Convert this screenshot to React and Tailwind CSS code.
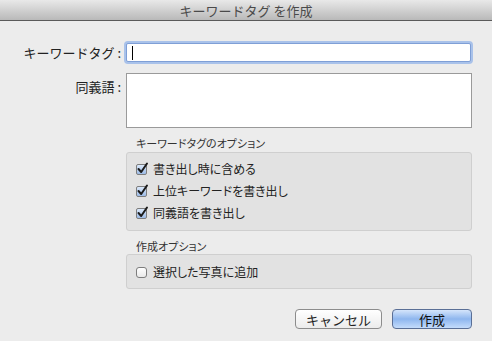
import React from 'react';

const font = { fontFamily: '"Noto Sans CJK JP", "Noto Sans", sans-serif' };

const Check = ({ checked }) => (
  <span
    className={`relative inline-flex h-[11px] w-[11px] shrink-0 border border-[#7d7d7d] ${
      checked ? 'rounded-[2px] bg-gradient-to-b from-[#dbe9fb] to-[#9dbbe6]' : 'rounded-[3px] bg-gradient-to-b from-white to-[#e9e9e9]'
    }`}
  >
    {checked && (
      <svg className="absolute -left-[1px] -top-[3px]" width="13" height="13" viewBox="0 0 13 13">
        <path d="M2.5 7 L5.2 10 L11 1.5" fill="none" stroke="#1b1b1b" strokeWidth="2" strokeLinecap="round" strokeLinejoin="round" />
      </svg>
    )}
  </span>
);

const Option = ({ checked, label }) => (
  <div className="flex h-[22px] items-center gap-[6px]">
    <Check checked={checked} />
    <span className="whitespace-nowrap text-[12px] leading-none text-[#222] [font-feature-settings:'palt']">{label}</span>
  </div>
);

export default function App() {
  return (
    <div className="h-[341px] w-[492px] overflow-hidden bg-[#ececec]" style={font}>
      {/* title bar */}
      <div className="flex h-[21px] items-center justify-center border-b border-[#5a5a5a] bg-gradient-to-b from-[#e9e9e9] to-[#b9b9b9]">
        <span className="text-[13px] leading-none text-[#4a4a4a]">キーワードタグ を作成</span>
      </div>

      <div className="px-[20px] pt-[22px]">
        <div className="flex items-center">
          <label className="w-[106px] whitespace-nowrap pr-[5px] text-right text-[13px] leading-none text-[#222]">キーワードタグ :</label>
          <div className="flex h-[19px] w-[345px] items-center rounded-[2px] border border-[#7f9fd6] bg-white pl-[5px] shadow-[0_0_0_2px_#a9c2ea]">
            <span className="h-[14px] w-px bg-black" />
          </div>
        </div>

        <div className="mt-[11px] flex items-start">
          <label className="w-[106px] whitespace-nowrap pr-[5px] pt-[7px] text-right text-[13px] leading-none text-[#222]">同義語 :</label>
          <div className="h-[55px] w-[346px] border border-[#9a9a9a] bg-white" />
        </div>

        <div className="ml-[106px] w-[346px]">
          <div className="pl-[10px] pt-[10px] text-[11px] leading-none text-[#333] [font-feature-settings:'palt']">キーワードタグのオプション</div>
          <div className="mt-[3px] h-[79px] rounded-[3px] border border-[#cfcfcf] bg-[#e2e2e2] pl-[9px] pt-[5px]">
            <Option checked label="書き出し時に含める" />
            <Option checked label="上位キーワードを書き出し" />
            <Option checked label="同義語を書き出し" />
          </div>

          <div className="pl-[10px] pt-[10px] text-[11px] leading-none text-[#333] [font-feature-settings:'palt']">作成オプション</div>
          <div className="mt-[2px] h-[35px] rounded-[3px] border border-[#cfcfcf] bg-[#e2e2e2] pl-[9px] pt-[6px]">
            <Option label="選択した写真に追加" />
          </div>

          <div className="mt-[20px] flex justify-end gap-[10px]">
            <button className="flex h-[20px] w-[87px] items-center justify-center rounded-[4px] border border-[#8c8c8c] bg-gradient-to-b from-white to-[#ececec] text-[13px] leading-none text-[#222]">
              キャンセル
            </button>
            <button className="flex h-[20px] w-[80px] items-center justify-center rounded-[4px] border border-[#5a6f96] bg-gradient-to-b from-[#d5e5fb] via-[#8eb6ee] to-[#c4dcfb] text-[13px] leading-none text-[#111]">
              作成
            </button>
          </div>
        </div>
      </div>
    </div>
  );
}
